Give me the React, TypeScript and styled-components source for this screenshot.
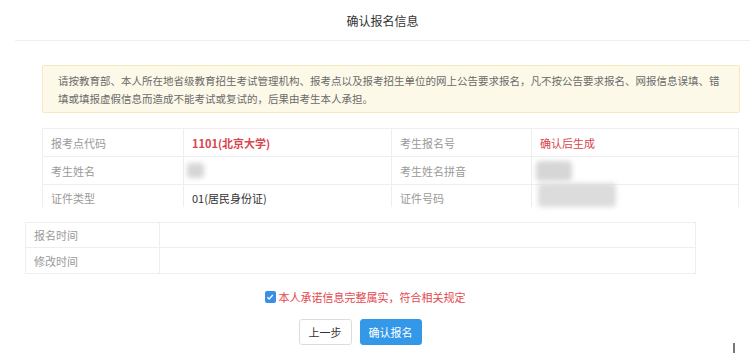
import React from "react";
import styled, { createGlobalStyle } from "styled-components";

const GlobalStyle = createGlobalStyle`
  html, body {
    margin: 0;
    padding: 0;
    background: #fff;
    font-family: "Noto Sans CJK SC", "Liberation Sans", sans-serif;
    color: #333;
  }
`;

const Page = styled.div`
  position: relative;
  width: 750px;
  height: 353px;
  overflow: hidden;
`;

const Header = styled.div`
  margin-left: 15px;
  height: 40px;
  border-bottom: 1px solid #efefef;
  display: flex;
  align-items: center;
  justify-content: center;
  font-size: 12px;
  color: #333;
`;

const Notice = styled.div`
  box-sizing: border-box;
  margin: 24px 0 15px 42px;
  width: 698px;
  height: 48px;
  padding: 6px 15px;
  background: #fdf9e9;
  border: 1px solid #f6e9bd;
  border-radius: 2px;
  font-size: 10.5px;
  line-height: 18px;
  color: #6a6a6a;
  white-space: nowrap;
`;

const InfoTable = styled.div<{ $left: number; $width: number; $gap?: number }>`
  box-sizing: border-box;
  margin-left: ${(p) => p.$left}px;
  margin-bottom: ${(p) => p.$gap ?? 0}px;
  width: ${(p) => p.$width}px;
  border: 1px solid #eee;
  border-bottom: none;
`;

const Row = styled.div<{ $cols: string; $h: number; $cut?: boolean }>`
  box-sizing: border-box;
  display: grid;
  grid-template-columns: ${(p) => p.$cols};
  height: ${(p) => p.$h}px;
  border-bottom: ${(p) => (p.$cut ? "none" : "1px solid #eee")};
  align-items: ${(p) => (p.$cut ? "start" : "stretch")};
`;

const Cell = styled.div<{ $tone?: "label" | "red" | "strong" | "plain"; $top?: number }>`
  position: relative;
  box-sizing: border-box;
  height: 100%;
  display: flex;
  align-items: ${(p) => (p.$top !== undefined ? "flex-start" : "center")};
  padding-left: 8px;
  padding-top: ${(p) => p.$top ?? 0}px;
  font-size: 11px;
  line-height: 14px;
  border-left: 1px solid #eee;
  &:first-child {
    border-left: none;
  }
  color: ${(p) =>
    p.$tone === "label" ? "#9a9a9a" : p.$tone === "red" || p.$tone === "strong" ? "#d9434b" : "#333"};
  font-weight: ${(p) => (p.$tone === "strong" ? 700 : 400)};
`;

const Blur = styled.div<{ $w: number; $h: number; $x: number; $y: number; $shade?: string }>`
  position: absolute;
  left: ${(p) => p.$x}px;
  top: ${(p) => p.$y}px;
  width: ${(p) => p.$w}px;
  height: ${(p) => p.$h}px;
  background: ${(p) => p.$shade ?? "#d6d6d6"};
  border-radius: 4px;
  filter: blur(2.5px);
`;

const Agreement = styled.div`
  margin-top: 15px;
  width: 730px;
  height: 16px;
  display: flex;
  justify-content: center;
  align-items: center;
  gap: 3px;
  font-size: 11px;
  line-height: 16px;
  color: #e4464c;
`;

const CheckBox = styled.span`
  width: 11px;
  height: 12px;
  border-radius: 2px;
  background: #3a8ee6;
  display: inline-flex;
  align-items: center;
  justify-content: center;
`;

const Actions = styled.div`
  margin-top: 14px;
  width: 720px;
  height: 26px;
  display: flex;
  justify-content: center;
  gap: 8px;
`;

const Button = styled.button<{ $primary?: boolean }>`
  box-sizing: border-box;
  height: 26px;
  margin: 0;
  padding: 0 ${(p) => (p.$primary ? 8 : 9)}px;
  border-radius: 3px;
  font-family: inherit;
  font-size: 11px;
  line-height: 24px;
  border: 1px solid ${(p) => (p.$primary ? "#3398e8" : "#dcdcdc")};
  background: ${(p) => (p.$primary ? "#3398e8" : "#fff")};
  color: ${(p) => (p.$primary ? "#fff" : "#333")};
`;

const Caret = styled.div`
  position: absolute;
  left: 733px;
  top: 343px;
  width: 2px;
  height: 10px;
  background: #777;
`;

const COLS4 = "140px 208px 140px 1fr";
const COLS2 = "133px 1fr";

export default function App() {
  return (
    <Page>
      <GlobalStyle />
      <Header>确认报名信息</Header>
      <Notice>
        请按教育部、本人所在地省级教育招生考试管理机构、报考点以及报考招生单位的网上公告要求报名，凡不按公告要求报名、网报信息误填、错
        <br />
        填或填报虚假信息而造成不能考试或复试的，后果由考生本人承担。
      </Notice>
      <InfoTable $left={42} $width={697} $gap={15}>
        <Row $cols={COLS4} $h={28}>
          <Cell $tone="label">报考点代码</Cell>
          <Cell $tone="strong">1101(北京大学)</Cell>
          <Cell $tone="label">考生报名号</Cell>
          <Cell $tone="red">确认后生成</Cell>
        </Row>
        <Row $cols={COLS4} $h={28}>
          <Cell $tone="label">考生姓名</Cell>
          <Cell>
            <Blur $x={3} $y={6} $w={17} $h={15} />
          </Cell>
          <Cell $tone="label">考生姓名拼音</Cell>
          <Cell>
            <Blur $x={4} $y={4} $w={36} $h={20} />
          </Cell>
        </Row>
        <Row $cols={COLS4} $h={22} $cut>
          <Cell $tone="label" $top={6}>证件类型</Cell>
          <Cell $tone="plain" $top={6}>01(居民身份证)</Cell>
          <Cell $tone="label" $top={6}>证件号码</Cell>
          <Cell $top={6}>
            <Blur $x={6} $y={-2} $w={78} $h={24} $shade="#dcdcdc" />
          </Cell>
        </Row>
      </InfoTable>
      <InfoTable $left={25} $width={671}>
        <Row $cols={COLS2} $h={25}>
          <Cell $tone="label">报名时间</Cell>
          <Cell />
        </Row>
        <Row $cols={COLS2} $h={26}>
          <Cell $tone="label">修改时间</Cell>
          <Cell />
        </Row>
      </InfoTable>
      <Agreement>
        <CheckBox>
          <svg width="8" height="8" viewBox="0 0 8 8">
            <path d="M1.3 4.2 L3.2 6 L6.8 2" stroke="#fff" strokeWidth="1.3" fill="none" />
          </svg>
        </CheckBox>
        本人承诺信息完整属实，符合相关规定
      </Agreement>
      <Actions>
        <Button>上一步</Button>
        <Button $primary>确认报名</Button>
      </Actions>
      <Caret />
    </Page>
  );
}
